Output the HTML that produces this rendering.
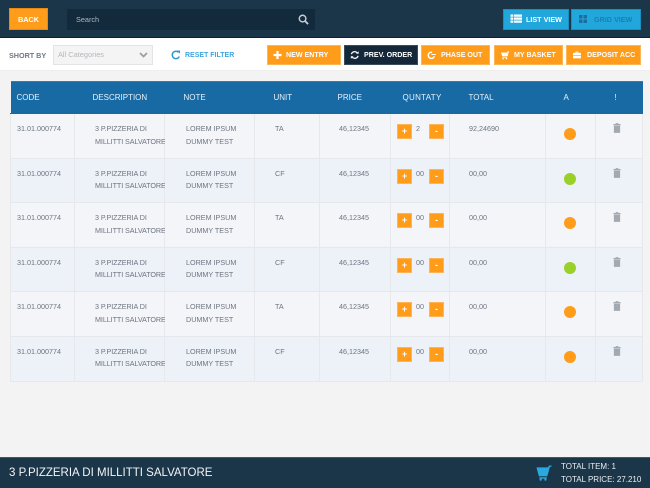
<!DOCTYPE html>
<html lang="en">
<head>
<meta charset="utf-8">
<title>Order</title>
<style>
html,body{margin:0;padding:0}
body{width:650px;height:488px;position:relative;overflow:hidden;background:#f3f3f3;font-family:"Liberation Sans",sans-serif;color:#6d7580}
*{box-sizing:border-box}
.a{position:absolute}
.top{left:0;top:0;width:650px;height:38px;background:#1c3649;border-bottom:1px solid #10202c}
.sub{left:0;top:38px;width:650px;height:33px;background:#fff;border-bottom:1px solid #eee}
.back{left:9px;top:8px;width:39px;height:22px;background:#ff9c1a;border:1px solid #e98a10;color:#fff;font-size:7.300px;font-weight:bold;text-align:center;line-height:21px}
.search{left:67px;top:9px;width:248px;height:21px;background:#122a3c;color:#aeb8c0;font-size:7.300px;line-height:21px;padding-left:9px}
.vbtn{top:9px;height:21px;background:#22a7dc;border:1px solid #1a8fc0;font-size:7.200px;font-weight:bold;line-height:20px;color:#fff}
.vbtn svg{position:absolute;left:6px;top:4px}
.vbtn span{position:absolute;left:22px;top:0;white-space:nowrap}
.btn{top:45px;height:20px;background:#ff9c1a;border:1px solid #ffb555;color:#fff;font-size:7.100px;font-weight:bold;line-height:19px;white-space:nowrap}
.btn svg{position:absolute;left:5px;top:4px}
.btn span{position:absolute;top:0;white-space:nowrap}
.dark{background:#14283a;border-color:#3c4d5c}
table{position:absolute;left:10px;top:81px;width:632px;border-collapse:collapse;table-layout:fixed;font-size:7.200px}
th{background:#186aa5;color:#e8f1f7;font-weight:normal;font-size:8px;height:32px;text-align:left;padding:0 0 0 5px;border-top:1px solid #2c7db8;border-bottom:1px solid #186aa5}
td{border:1px solid #e6e8ec;vertical-align:top;padding:9px 0 0 0;line-height:12.600px;height:44.500px;color:#6d7580;position:relative}
tr.o td{background:#f4f5f9}
tr.e td{background:#edf1f8}
tr.f td{height:45.500px}
td.c{padding-left:6px}
td.d{padding-left:20px;white-space:nowrap;letter-spacing:-.08px}
td.n{padding-left:21px;white-space:nowrap}
td.u{padding-left:20px}
td.p{padding-left:19px}
td.t{padding-left:19px}
.pm{position:absolute;top:10px;width:15px;height:15px;background:#ff9c1a;border:1px solid #ffb555;color:#fff;font-size:9px;font-weight:bold;text-align:center;line-height:12px}
.pl{left:6px}
.mi{left:38px}
.q{position:absolute;left:25px;top:9px}
.dot{position:absolute;left:18px;top:14px;width:12px;height:12px;border-radius:50%;background:#ff9c1a}
.g{background:#9ad02a}
.tr{position:absolute;left:17px;top:9px}
.foot{left:0;top:457px;width:650px;height:31px;background:#1c3649;border-top:1px solid #4a5560}
.fname{left:9px;top:465px;color:#f1f4f6;font-size:11.500px;line-height:16px;white-space:nowrap}
.ft{left:561px;color:#e8edf0;font-size:8px;line-height:13px;white-space:nowrap}
</style>
</head>
<body>
<div class="a top"></div>
<div class="a back">BACK</div>
<div class="a search">Search</div>
<svg class="a" style="left:298px;top:14px" width="11" height="11" viewBox="0 0 12 12"><circle cx="5" cy="5" r="3.600" fill="none" stroke="#c4ccd2" stroke-width="1.600"/><path d="M7.800 7.800L11 11" stroke="#c4ccd2" stroke-width="2"/></svg>

<div class="a vbtn" style="left:503px;width:66px"><svg width="12" height="11" viewBox="0 0 12 11" fill="#fff"><path d="M0.500 0.500h2.800v2.200H0.500zM4 0.500H12v2.200H4zM0.500 3.500h2.800v2.200H0.500zM4 3.500H12v2.200H4zM0.500 6.500h2.800v2.200H0.500zM4 6.500H12v2.200H4z"/></svg><span>LIST VIEW</span></div>
<div class="a vbtn" style="left:571px;width:70px;color:#1b7fae"><svg style="left:6px" width="10" height="10" viewBox="0 0 10 10" fill="#1a6f9e"><path d="M1 1h3.500v3.500H1zM5.500 1H9v3.500H5.500zM1 5.500h3.500V9H1zM5.500 5.500H9V9H5.500z"/></svg><span>GRID VIEW</span></div>

<div class="a sub"></div>
<div class="a" style="left:9px;top:50px;font-size:7.200px;font-weight:bold;color:#6f7780;line-height:11px">SHORT BY</div>
<div class="a" style="left:53px;top:45px;width:100px;height:20px;background:#f4f4f4;border:1px solid #e4e4e4;font-size:7.400px;line-height:18px;color:#b3b7bb;padding-left:4px">All Categories</div>
<svg class="a" style="left:139px;top:52px" width="9" height="6" viewBox="0 0 9 6"><path d="M1 1l3.500 3.500L8 1" fill="none" stroke="#9aa0a6" stroke-width="1.800"/></svg>
<svg class="a" style="left:171px;top:50px" width="10" height="10" viewBox="0 0 10 10"><path d="M8.300 6.500A3.700 3.700 0 1 1 7.500 2.300" fill="none" stroke="#2a9ad6" stroke-width="1.500"/><path d="M6 0.500L9 0.500L9 3.800z" fill="#2a9ad6"/></svg>
<div class="a" style="left:185px;top:50px;font-size:7px;font-weight:bold;color:#3fa7de;line-height:11px;white-space:nowrap">RESET FILTER</div>

<div class="a btn" style="left:267px;width:74px"><svg width="9" height="10" viewBox="0 0 9 10"><path d="M4.500 1v8M0.500 5h8" stroke="#fff" stroke-width="2.200"/></svg><span style="left:18px">NEW ENTRY</span></div>
<div class="a btn dark" style="left:344px;width:74px"><svg width="9.500" height="10" viewBox="0 0 11 12"><path d="M1.500 5A4 4 0 0 1 8.500 3.500M9.500 7A4 4 0 0 1 2.500 8.500" fill="none" stroke="#fff" stroke-width="1.500"/><path d="M7 4.500h3.200V1.500zM4 7.500H0.800V10.500z" fill="#fff"/></svg><span style="left:19px">PREV. ORDER</span></div>
<div class="a btn" style="left:421px;width:69px"><svg width="9.500" height="10" viewBox="0 0 11 12"><path d="M8.500 7.500A3.700 3.700 0 1 1 6 2.800" fill="none" stroke="#fff" stroke-width="1.800"/><path d="M5 4.800h5.500V6H5z" fill="#fff"/></svg><span style="left:19px">PHASE OUT</span></div>
<div class="a btn" style="left:494px;width:69px"><svg width="9.500" height="10" viewBox="0 0 11 12" fill="#fff"><path d="M1 3h7.500l.8-1.800h1.200L9 7.500H2.500z"/><path d="M2.500 8.200h6v1h-6z"/><circle cx="3.500" cy="10.300" r=".9"/><circle cx="7.500" cy="10.300" r=".9"/></svg><span style="left:19px">MY BASKET</span></div>
<div class="a btn" style="left:566px;width:75px"><svg width="9.500" height="10" viewBox="0 0 11 12" fill="#fff"><path d="M4 2h3.500v1.500h3V6H1V3.500h3zM5 3v.5h1.500V3zM1 6.800h9.500V10H1z"/></svg><span style="left:20px">DEPOSIT ACC</span></div>

<table>
<colgroup><col style="width:64px"><col style="width:90px"><col style="width:90px"><col style="width:65px"><col style="width:71px"><col style="width:59px"><col style="width:96px"><col style="width:50px"><col style="width:47px"></colgroup>
<tr><th style="padding-left:6px">CODE</th><th style="padding-left:18px">DESCRIPTION</th><th style="padding-left:19px">NOTE</th><th style="padding-left:19px">UNIT</th><th style="padding-left:18px">PRICE</th><th style="padding-left:12px;letter-spacing:.3px">QUNTATY</th><th style="padding-left:19px">TOTAL</th><th style="padding-left:18px">A</th><th style="padding-left:19px">!</th></tr>
<tr class="o"><td class="c">31.01.000774</td><td class="d">3 P.PIZZERIA DI<br>MILLITTI SALVATORE</td><td class="n">LOREM IPSUM<br>DUMMY TEST</td><td class="u">TA</td><td class="p">46,12345</td><td><span class="pm pl">+</span><span class="q">2</span><span class="pm mi">-</span></td><td class="t">92,24690</td><td><span class="dot"></span></td><td><svg class="tr" width="8" height="10" viewBox="0 0 9 11" fill="#a3a9b0"><path d="M3 0h3v1h2.500v1.500H.5V1H3zM1 3h7v8H1z"/></svg></td></tr>
<tr class="e"><td class="c">31.01.000774</td><td class="d">3 P.PIZZERIA DI<br>MILLITTI SALVATORE</td><td class="n">LOREM IPSUM<br>DUMMY TEST</td><td class="u">CF</td><td class="p">46,12345</td><td><span class="pm pl">+</span><span class="q">00</span><span class="pm mi">-</span></td><td class="t">00,00</td><td><span class="dot g"></span></td><td><svg class="tr" width="8" height="10" viewBox="0 0 9 11" fill="#a3a9b0"><path d="M3 0h3v1h2.500v1.500H.5V1H3zM1 3h7v8H1z"/></svg></td></tr>
<tr class="o"><td class="c">31.01.000774</td><td class="d">3 P.PIZZERIA DI<br>MILLITTI SALVATORE</td><td class="n">LOREM IPSUM<br>DUMMY TEST</td><td class="u">TA</td><td class="p">46,12345</td><td><span class="pm pl">+</span><span class="q">00</span><span class="pm mi">-</span></td><td class="t">00,00</td><td><span class="dot"></span></td><td><svg class="tr" width="8" height="10" viewBox="0 0 9 11" fill="#a3a9b0"><path d="M3 0h3v1h2.500v1.500H.5V1H3zM1 3h7v8H1z"/></svg></td></tr>
<tr class="e"><td class="c">31.01.000774</td><td class="d">3 P.PIZZERIA DI<br>MILLITTI SALVATORE</td><td class="n">LOREM IPSUM<br>DUMMY TEST</td><td class="u">CF</td><td class="p">46,12345</td><td><span class="pm pl">+</span><span class="q">00</span><span class="pm mi">-</span></td><td class="t">00,00</td><td><span class="dot g"></span></td><td><svg class="tr" width="8" height="10" viewBox="0 0 9 11" fill="#a3a9b0"><path d="M3 0h3v1h2.500v1.500H.5V1H3zM1 3h7v8H1z"/></svg></td></tr>
<tr class="o"><td class="c">31.01.000774</td><td class="d">3 P.PIZZERIA DI<br>MILLITTI SALVATORE</td><td class="n">LOREM IPSUM<br>DUMMY TEST</td><td class="u">TA</td><td class="p">46,12345</td><td><span class="pm pl">+</span><span class="q">00</span><span class="pm mi">-</span></td><td class="t">00,00</td><td><span class="dot"></span></td><td><svg class="tr" width="8" height="10" viewBox="0 0 9 11" fill="#a3a9b0"><path d="M3 0h3v1h2.500v1.500H.5V1H3zM1 3h7v8H1z"/></svg></td></tr>
<tr class="e f"><td class="c">31.01.000774</td><td class="d">3 P.PIZZERIA DI<br>MILLITTI SALVATORE</td><td class="n">LOREM IPSUM<br>DUMMY TEST</td><td class="u">CF</td><td class="p">46,12345</td><td><span class="pm pl">+</span><span class="q">00</span><span class="pm mi">-</span></td><td class="t">00,00</td><td><span class="dot"></span></td><td><svg class="tr" width="8" height="10" viewBox="0 0 9 11" fill="#a3a9b0"><path d="M3 0h3v1h2.500v1.500H.5V1H3zM1 3h7v8H1z"/></svg></td></tr>
</table>

<div class="a foot"></div>
<div class="a fname">3 P.PIZZERIA DI MILLITTI SALVATORE</div>
<svg class="a" style="left:536px;top:465px" width="16" height="16" viewBox="0 0 17 17" fill="#2aa9e0"><path d="M0.500 2.500H12.500L14 0.500H16.500V1.800H14.800L12 12H3z"/><path d="M3.500 13h8v1.500h-8z"/><circle cx="5" cy="15.500" r="1.200"/><circle cx="10" cy="15.500" r="1.200"/></svg>
<div class="a ft" style="top:460px">TOTAL ITEM: 1</div>
<div class="a ft" style="top:473px">TOTAL PRICE: 27.210</div>
</body>
</html>
